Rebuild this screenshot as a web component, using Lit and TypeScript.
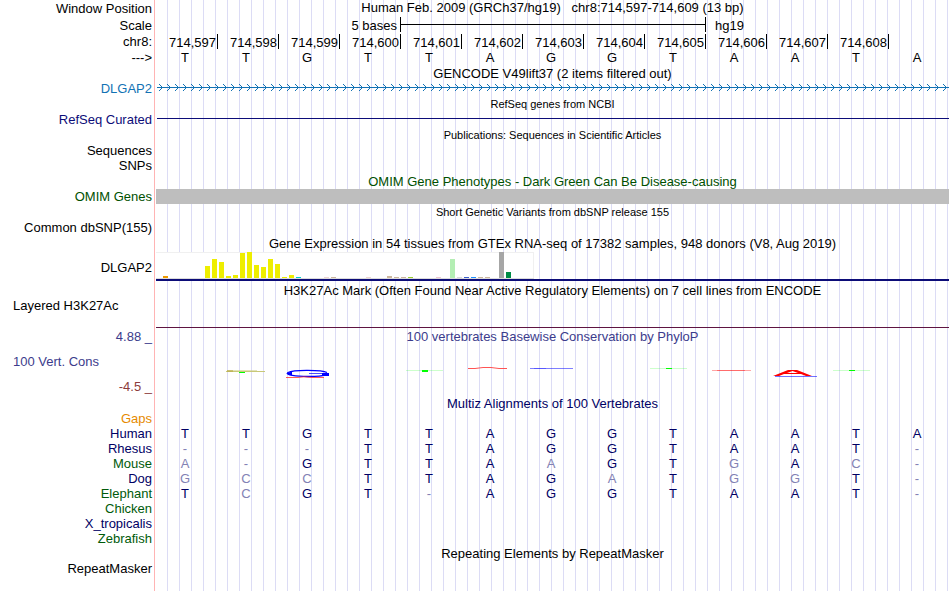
import { LitElement, html, svg, css, nothing } from "lit";
import { customElement } from "lit/decorators.js";
import { classMap } from "lit/directives/class-map.js";
import { styleMap } from "lit/directives/style-map.js";

const REFERENCE = "TTGTTAGGTAATA";
const FIRST_BASE = 714597;

interface Species {
  name: string;
  tone: string;
  bases: string;
}

const SPECIES: Species[] = [
  { name: "Gaps", tone: "orange", bases: "" },
  { name: "Human", tone: "deep", bases: "TTGTTAGGTAATA" },
  { name: "Rhesus", tone: "deep", bases: "---TTAGGTAAT-" },
  { name: "Mouse", tone: "leaf", bases: "A-GTTAAGTGAC-" },
  { name: "Dog", tone: "deep", bases: "GCCTTAGATGGT-" },
  { name: "Elephant", tone: "leaf", bases: "TCGT-AGGTAAT-" },
  { name: "Chicken", tone: "leaf", bases: "" },
  { name: "X_tropicalis", tone: "deep", bases: "" },
  { name: "Zebrafish", tone: "leaf", bases: "" },
];

// Tissue slot, bar height, bar colour
const EXPRESSION: [number, number, string][] = [
  [1, 2, "#ee9a00"],
  [7, 12, "#eeee00"], [8, 19, "#eeee00"], [9, 16, "#eeee00"],
  [10, 2, "#eeee00"], [11, 3, "#eeee00"], [12, 25, "#eeee00"],
  [13, 26, "#eeee00"], [14, 13, "#eeee00"], [15, 11, "#eeee00"],
  [16, 19, "#eeee00"], [17, 14, "#eeee00"], [18, 1, "#eeee00"],
  [19, 3, "#eeee00"], [20, 1, "#00cdcd"],
  [24, 1, "#eed5d2"], [25, 1, "#cdb79e"], [30, 1, "#eed5d2"],
  [33, 2, "#cdb79e"], [34, 1, "#cdb79e"], [35, 1, "#cdb79e"],
  [36, 1, "#9acd32"], [40, 1, "#eec8d2"], [42, 19, "#b4eeb4"],
  [43, 1, "#d9d9d9"], [44, 1, "#3a5fcd"], [45, 1, "#1e90ff"],
  [46, 1, "#cdb79e"], [47, 1, "#cdb79e"], [49, 26, "#a6a6a6"],
  [50, 6, "#008b45"],
];
const TISSUES = 54;

const flatT = (y: number, h: number) => svg`
  <rect x="6" y=${y} width="37" height="1" fill="#00ff00" opacity="0.2"/>
  <rect x="22" y=${y} width="6" height=${h} fill="#00ff00"/>`;

// Conservation marks, one drawing per base column
const MARKS: Record<number, unknown> = {
  1: svg`
    <rect x="9" y="9" width="39" height="1" fill="#c8c878"/>
    <rect x="10" y="8" width="6" height="2" fill="#bcb050" opacity="0.8"/>
    <path d="M16 8.5H40" stroke="#c8c878" opacity="0.5"/>
    <rect x="22" y="10" width="6" height="1" fill="#00ff00"/>`,
  2: svg`
    <path d="M49 10.500C44 8 16 7.500 10 10.500C7 13 18 14.500 30 14.500C38 14.500 45 14 46 13" fill="none" stroke="#0000ff" stroke-width="1.300"/>
    <path d="M8 11.500L14 9.500V13.500Z" fill="#0000ff"/>
    <rect x="31" y="11" width="20" height="1" fill="#0000ff" opacity="0.7"/>
    <rect x="44" y="11" width="7" height="3" fill="#0000ff"/>
    <path d="M8 15.500H20L26 14.800L34 15.500H46" fill="none" stroke="#ff3030" opacity="0.8"/>`,
  4: flatT(8, 2),
  5: svg`<path d="M7 6.500H14L22 5.500H30L38 6.500H46" fill="none" stroke="#ff4040" opacity="0.9"/>`,
  6: svg`
    <rect x="8" y="6" width="43" height="1" fill="#0000ff" opacity="0.5"/>
    <rect x="12" y="6" width="12" height="1" fill="#0000ff" opacity="0.3"/>`,
  8: flatT(6, 1),
  9: svg`
    <rect x="7" y="8" width="39" height="1" fill="#ff0000" opacity="0.35"/>
    <rect x="12" y="8" width="28" height="1" fill="#ff0000" opacity="0.35"/>`,
  10: svg`
    <rect x="9" y="14" width="42" height="1" fill="#0000ff" opacity="0.55"/>
    <path d="M7 14L22 8H31L46 14H40L35 12H18L13 14Z M21 11H32L26.500 9Z" fill="#ff0000" fill-rule="evenodd"/>`,
  11: flatT(8, 1),
};

@customElement("app-root")
export class AppRoot extends LitElement {
  static styles = css`
    :host {
      display: block;
      background: #fff;
      color: #000;
      font: 13px/15px "Liberation Sans", Arial, sans-serif;
    }
    table {
      display: flex;
      flex-direction: column;
      min-height: 100vh;
      margin-right: 1px;
    }
    tbody {
      display: flex;
      flex-direction: column;
      flex: 1;
    }
    tr {
      display: grid;
      grid-template-columns: 156px repeat(13, minmax(0, 1fr));
      grid-auto-rows: minmax(15px, auto);
      background: linear-gradient(to right, #dcdcf5 1px, transparent 1px) 11px 0 / 12px 100%;
    }
    th,
    td {
      padding: 0;
      font-weight: normal;
      white-space: nowrap;
    }
    th {
      padding-right: 4px;
      text-align: right;
      background: linear-gradient(to right, #fff 154px, #ffb4b4 154px 155px, #fff 155px);
    }
    td {
      text-align: center;
    }
    .wide {
      grid-column: 2 / -1;
    }
    .head {
      line-height: 16px;
    }
    .title {
      height: 16px;
      line-height: 18px;
    }
    .roomy {
      line-height: 17px;
    }
    .small {
      font-size: 11px;
      line-height: 16px;
    }
    .last {
      flex: 1;
    }
    .scale-label {
      grid-column: 2 / 6;
      padding-right: 3px;
      text-align: right;
    }
    .scale-bar {
      grid-column: 6 / 11;
      height: 15px;
      border-left: 1px solid #000;
      background: linear-gradient(#000, #000) 0 7px / 100% 1px no-repeat;
    }
    .scale-end {
      grid-column: 11 / -1;
      height: 15px;
      padding-left: 9px;
      border-left: 1px solid #000;
      text-align: left;
    }
    .position {
      height: 15px;
      padding-right: 1px;
      text-align: right;
      line-height: 18px;
    }
    .position + .position {
      border-left: 1px solid #000;
    }
    .base {
      padding-right: 3px;
    }
    .sky { color: #1272b4; }
    .navy { color: #0c0c78; }
    .green { color: #005000; }
    .slate { color: #3c3c8c; }
    .rust { color: #8c3c3c; }
    .orange { color: #e68a00; }
    .deep { color: #000064; }
    .leaf { color: #005a0a; }
    .dim { color: #8282b4; }
    .strip {
      display: block;
      width: 100%;
      height: 15px;
    }
    .omim {
      background: #bebebe;
    }
    .expression {
      padding-top: 1px;
      height: 30px;
    }
    .expression-label {
      line-height: 33px;
      height: 31px;
    }
    .bars {
      box-sizing: border-box;
      display: flex;
      align-items: flex-end;
      gap: 2px;
      width: 378px;
      height: 27px;
      background: #fff;
      border-bottom: 1px solid #dcdcdc;
      box-shadow: inset 0 1px #f0f0f0, inset -1px 0 #f0f0f0;
    }
    .bar {
      width: 5px;
    }
    .baseline {
      height: 2px;
      background: #0c0c78;
    }
    .left {
      padding-left: 13px;
      text-align: left;
    }
    .acetyl {
      height: 29px;
      border-bottom: 1px solid #5f1441;
    }
    .cons-label {
      display: flex;
      flex-direction: column;
      gap: 9px;
      height: 68px;
      line-height: 18px;
    }
    .cons-label span {
      height: 16px;
    }
    .cons {
      display: grid;
      grid-template-columns: repeat(13, minmax(0, 1fr));
      align-content: start;
      row-gap: 18px;
      line-height: 18px;
    }
    .cons-title {
      grid-column: 1 / -1;
      height: 16px;
    }
    .mark {
      display: block;
      width: 61px;
      height: 20px;
    }
  `;

  private heading(text: string, tone = "", small = false) {
    return html`<tr class="head">
      <th></th>
      <td class=${classMap({ wide: true, title: true, small, [tone || "plain"]: true })}>${text}</td>
    </tr>`;
  }

  private item(label: string, tone = "plain", content: unknown = nothing, track = "") {
    return html`<tr>
      <th scope="row" class=${tone}>${label}</th>
      <td class="wide ${track}">${content}</td>
    </tr>`;
  }

  private bases(label: string, tone: string, letters: string, letterTone: string) {
    return html`<tr>
      <th scope="row" class=${tone}>${label}</th>
      ${[...letters].map((c, i) => {
        const t = c === REFERENCE[i] ? letterTone : "dim";
        return html`<td class="base ${t}">${c}</td>`;
      })}
    </tr>`;
  }

  private geneArrows() {
    return html`<svg class="strip" shape-rendering="crispEdges" aria-hidden="true">
      <defs>
        <pattern id="chevrons" width="8" height="15" patternUnits="userSpaceOnUse">
          <path d="M3 3h1v1h1v1h1v1h1v1h-1v1h-1v1h-1v1h-1v-1h1v-1h1v-1h1v-1h-1v-1h-1v-1h-1z" fill="#1272b4" />
        </pattern>
      </defs>
      <rect x="1" y="6" width="100%" height="1" fill="#1272b4" />
      <rect width="100%" height="15" fill="url(#chevrons)" />
    </svg>`;
  }

  private expressionBars() {
    const bySlot = new Map(EXPRESSION.map(([slot, h, c]) => [slot, { h, c }]));
    return html`<div class="bars">
        ${Array.from({ length: TISSUES }, (_, i) => {
          const b = bySlot.get(i);
          return html`<div
            class="bar"
            style=${styleMap({ height: `${b?.h ?? 0}px`, background: b?.c ?? "none" })}
          ></div>`;
        })}
      </div>
      <div class="baseline"></div>`;
  }

  render() {
    return html`<table>
      <tbody>
        <tr class="roomy">
          <th scope="row">Window Position</th>
          <td class="wide head">Human Feb. 2009 (GRCh37/hg19) &nbsp; chr8:714,597-714,609 (13 bp)</td>
        </tr>
        <tr class="roomy">
          <th scope="row">Scale</th>
          <td class="scale-label">5 bases</td>
          <td class="scale-bar"></td>
          <td class="scale-end">hg19</td>
        </tr>
        <tr class="head">
          <th scope="row">chr8:</th>
          ${Array.from(REFERENCE, (_, i) => html`<td class="position">
            ${i < REFERENCE.length - 1 ? (FIRST_BASE + i).toLocaleString("en-US") : nothing}
          </td>`)}
        </tr>
        ${this.bases("--->", "plain", REFERENCE, "plain")}
        ${this.heading("GENCODE V49lift37 (2 items filtered out)")}
        ${this.item("DLGAP2", "sky", this.geneArrows())}
        ${this.heading("RefSeq genes from NCBI", "", true)}
        ${this.item(
          "RefSeq Curated",
          "navy",
          html`<svg class="strip" shape-rendering="crispEdges" aria-hidden="true">
            <rect x="1" y="6" width="100%" height="1" fill="#0c0c78" />
          </svg>`
        )}
        ${this.heading("Publications: Sequences in Scientific Articles", "", true)}
        ${this.item("Sequences")} ${this.item("SNPs")}
        ${this.heading("OMIM Gene Phenotypes - Dark Green Can Be Disease-causing", "green")}
        ${this.item("OMIM Genes", "green", nothing, "omim")}
        ${this.heading("Short Genetic Variants from dbSNP release 155", "", true)}
        ${this.item("Common dbSNP(155)")}
        ${this.heading("Gene Expression in 54 tissues from GTEx RNA-seq of 17382 samples, 948 donors (V8, Aug 2019)")}
        ${this.item("DLGAP2", "expression-label", this.expressionBars(), "expression")}
        ${this.heading("H3K27Ac Mark (Often Found Near Active Regulatory Elements) on 7 cell lines from ENCODE")}
        ${this.item("Layered H3K27Ac", "left", nothing, "acetyl")}
        <tr>
          <th scope="row" class="cons-label">
            <span class="slate">4.88 _</span>
            <span class="slate left">100 Vert. Cons</span>
            <span class="rust">-4.5 _</span>
          </th>
          <td class="wide cons">
            <div class="cons-title slate">100 vertebrates Basewise Conservation by PhyloP</div>
            ${Array.from(REFERENCE, (_, i) => html`<svg class="mark" aria-hidden="true">${MARKS[i] ?? nothing}</svg>`)}
          </td>
        </tr>
        <tr>
          <th></th>
          <td class="wide deep">Multiz Alignments of 100 Vertebrates</td>
        </tr>
        ${SPECIES.map((s) => this.bases(s.name, s.tone, s.bases, "deep"))}
        <tr>
          <th></th>
          <td class="wide">Repeating Elements by RepeatMasker</td>
        </tr>
        <tr class="last">
          <th scope="row">RepeatMasker</th>
          <td class="wide"></td>
        </tr>
      </tbody>
    </table>`;
  }
}
